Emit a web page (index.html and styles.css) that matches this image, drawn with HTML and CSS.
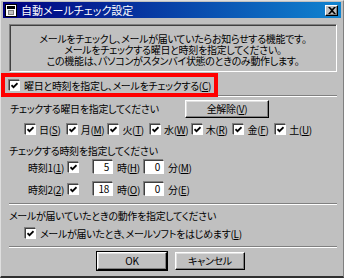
FILE: index.html
```html
<!DOCTYPE html>
<html lang="ja">
<head>
    <meta charset="UTF-8">
    <title>自動メールチェック設定</title>
    <link rel="stylesheet" href="styles.css">
</head>
<body>
    <div class="window">
        <div class="titlebar">
            <svg class="app-icon" width="12" height="13" viewBox="0 0 12 13">
                <rect x="0.5" y="0.5" width="11" height="12" fill="#fff" stroke="#000"/>
                <rect x="2" y="2" width="8" height="3" fill="#000"/>
                <rect x="3" y="6" width="6" height="5" fill="#808080"/>
                <rect x="4" y="7" width="4" height="3" fill="#c0c0c0"/>
            </svg>
            <span class="title">自動メールチェック設定</span>
            <span class="close-btn">
                <svg width="8" height="7" viewBox="0 0 8 7">
                    <path d="M0 0h2l2 2 2-2h2L5 3.5 8 7H6L4 5 2 7H0l3-3.5z" fill="#000"/>
                </svg>
            </span>
        </div>

        <div class="content">
            <div class="desc">
                <p>メールをチェックし、メールが届いていたらお知らせする機能です。</p>
                <p>メールをチェックする曜日と時刻を指定してください。</p>
                <p>この機能は、パソコンがスタンバイ状態のときのみ動作します。</p>
            </div>

            <div class="enable-row">
                <label class="enable">
                    <span class="cb"><svg viewBox="0 0 7 7"><path d="M0.5 3.2 2.5 5.2 6.5 1.2"/></svg></span>
                    <span>曜日と時刻を指定し、メールをチェックする(<u>C</u>)</span>
                </label>
                <span class="rule"></span>
            </div>

            <div class="week-head">
                <span class="week-label">チェックする曜日を指定してください</span>
                <button class="btn clear-btn">全解除(<u>V</u>)</button>
            </div>

            <div class="days">
                <label class="day"><span class="cb"><svg viewBox="0 0 7 7"><path d="M0.5 3.2 2.5 5.2 6.5 1.2"/></svg></span><span>日(<u>S</u>)</span></label>
                <label class="day"><span class="cb"><svg viewBox="0 0 7 7"><path d="M0.5 3.2 2.5 5.2 6.5 1.2"/></svg></span><span>月(<u>M</u>)</span></label>
                <label class="day"><span class="cb"><svg viewBox="0 0 7 7"><path d="M0.5 3.2 2.5 5.2 6.5 1.2"/></svg></span><span>火(<u>T</u>)</span></label>
                <label class="day"><span class="cb"><svg viewBox="0 0 7 7"><path d="M0.5 3.2 2.5 5.2 6.5 1.2"/></svg></span><span>水(<u>W</u>)</span></label>
                <label class="day"><span class="cb"><svg viewBox="0 0 7 7"><path d="M0.5 3.2 2.5 5.2 6.5 1.2"/></svg></span><span>木(<u>R</u>)</span></label>
                <label class="day"><span class="cb"><svg viewBox="0 0 7 7"><path d="M0.5 3.2 2.5 5.2 6.5 1.2"/></svg></span><span>金(<u>F</u>)</span></label>
                <label class="day"><span class="cb"><svg viewBox="0 0 7 7"><path d="M0.5 3.2 2.5 5.2 6.5 1.2"/></svg></span><span>土(<u>U</u>)</span></label>
            </div>

            <div class="section-label time-label">チェックする時刻を指定してください</div>

            <div class="time-row">
                <span class="time-name">時刻1(<u>1</u>)</span>
                <span class="cb"><svg viewBox="0 0 7 7"><path d="M0.5 3.2 2.5 5.2 6.5 1.2"/></svg></span>
                <span class="num hour">5</span>
                <span class="unit">時(<u>H</u>)</span>
                <span class="num">0</span>
                <span class="unit">分(<u>M</u>)</span>
            </div>
            <div class="time-row second">
                <span class="time-name">時刻2(<u>2</u>)</span>
                <span class="cb"><svg viewBox="0 0 7 7"><path d="M0.5 3.2 2.5 5.2 6.5 1.2"/></svg></span>
                <span class="num hour">18</span>
                <span class="unit">時(<u>O</u>)</span>
                <span class="num">0</span>
                <span class="unit">分(<u>E</u>)</span>
            </div>

            <div class="rule full sep1"></div>

            <div class="section-label mail-label">メールが届いていたときの動作を指定してください</div>
            <label class="mail-opt">
                <span class="cb"><svg viewBox="0 0 7 7"><path d="M0.5 3.2 2.5 5.2 6.5 1.2"/></svg></span>
                <span>メールが届いたとき、メールソフトをはじめます(<u>L</u>)</span>
            </label>

            <div class="rule full sep2"></div>

            <div class="actions">
                <button class="btn default">OK</button>
                <button class="btn">キャンセル</button>
            </div>
        </div>
    </div>
</body>
</html>
```

FILE: styles.css
```css
* {
    margin: 0;
    padding: 0;
    box-sizing: border-box;
}

body {
    width: 344px;
    height: 278px;
    overflow: hidden;
    background: #c0c0c0;
    color: #000;
    font-family: "Noto Sans CJK JP", sans-serif;
    font-size: 10px;
    letter-spacing: -0.3px;
    font-feature-settings: "palt";
}

u {
    text-decoration: underline;
    text-underline-offset: 1px;
}

.window {
    height: 278px;
    padding: 1px 2px 0;
    border-top: 1px solid #dfdfdf;
    border-left: 1px solid #dfdfdf;
    border-right: 1px solid #808080;
    border-bottom: 2px solid #303030;
}

/* title bar */
.titlebar {
    height: 16px;
    display: flex;
    align-items: center;
    padding: 0 3px 0 2px;
    background: linear-gradient(to right, #000080, #1084d0);
}

.app-icon {
    flex-shrink: 0;
}

.title {
    margin-left: 4px;
    color: #fff;
    font-size: 11px;
    letter-spacing: 0;
    line-height: 16px;
}

.close-btn {
    margin-left: auto;
    width: 13px;
    height: 11px;
    display: flex;
    align-items: center;
    justify-content: center;
    background: #c0c0c0;
    border: 1px solid;
    border-color: #fff #000 #000 #fff;
    box-shadow: inset -1px -1px #808080;
}

/* dialog body */
.content {
    padding: 0 4px 0 6px;
}

.desc {
    height: 48px;
    margin-top: 6px;
    padding-top: 8px;
    text-align: center;
    line-height: 11px;
    border: 1px solid;
    border-color: #808080 #fff #fff #808080;
    box-shadow: inset 1px 1px #404040;
}

.enable-row {
    display: flex;
    align-items: flex-end;
    margin-left: -8px;
    margin-top: 1px;
}

.enable {
    height: 24px;
    display: flex;
    align-items: center;
    gap: 4px;
    padding: 0 3px 0 4px;
    border: 4px solid #ff0000;
    white-space: nowrap;
}

.rule {
    display: block;
    height: 2px;
    flex: 1;
    border-top: 1px solid #808080;
    border-bottom: 1px solid #fff;
}

/* checkbox */
.cb {
    width: 11px;
    height: 11px;
    flex-shrink: 0;
    display: inline-flex;
    align-items: center;
    justify-content: center;
    background: #fff;
    border: 1px solid;
    border-color: #404040 #fff #fff #404040;
    box-shadow: -1px -1px 0 #808080;
}

.cb svg {
    width: 7px;
    height: 7px;
}

.cb path {
    fill: none;
    stroke: #000;
    stroke-width: 1.7;
}

.week-head {
    display: flex;
    align-items: center;
    margin-top: 2px;
    height: 19px;
}

.week-label {
    width: 176px;
    padding-left: 1px;
}

.btn {
    font-family: inherit;
    font-size: 10px;
    letter-spacing: -0.3px;
    font-feature-settings: "palt";
    color: #000;
    background: #c0c0c0;
    border: 1px solid;
    border-color: #fff #000 #000 #fff;
    box-shadow: inset -1px -1px #808080, inset 1px 1px #dfdfdf;
}

.clear-btn {
    width: 84px;
    height: 18px;
    line-height: 14px;
}

.days {
    display: flex;
    margin-top: 5px;
    padding-left: 16px;
    height: 13px;
}

.day {
    width: 41.7px;
    display: flex;
    align-items: center;
    gap: 3px;
    white-space: nowrap;
}

.section-label {
    line-height: 13px;
}

.time-label {
    margin-top: 8px;
}

.time-row {
    display: flex;
    align-items: center;
    height: 14px;
    margin-top: 3px;
    padding-left: 19px;
}

.time-row.second {
    margin-top: 8px;
}

.time-name {
    width: 40px;
    white-space: nowrap;
}

.num {
    width: 20px;
    height: 14px;
    padding-right: 3px;
    text-align: right;
    line-height: 12px;
    background: #fff;
    border: 1px solid;
    border-color: #404040 #fff #fff #404040;
    box-shadow: -1px -1px 0 #808080;
}

.num.hour {
    margin-left: 14px;
}

.unit {
    width: 31px;
    padding-left: 4px;
    white-space: nowrap;
}

.rule.full {
    flex: none;
}

.sep1 {
    margin-top: 7px;
}

.mail-label {
    margin-top: 4px;
}

.mail-opt {
    display: flex;
    align-items: center;
    gap: 4px;
    height: 13px;
    margin-top: 5px;
    padding-left: 16px;
}

.sep2 {
    margin-top: 6px;
}

.actions {
    display: flex;
    justify-content: center;
    gap: 8px;
    margin-top: 4px;
    padding-right: 4px;
}

.actions .btn {
    width: 70px;
    height: 18px;
    line-height: 14px;
}

.btn.default {
    outline: 1px solid #000;
}
```
